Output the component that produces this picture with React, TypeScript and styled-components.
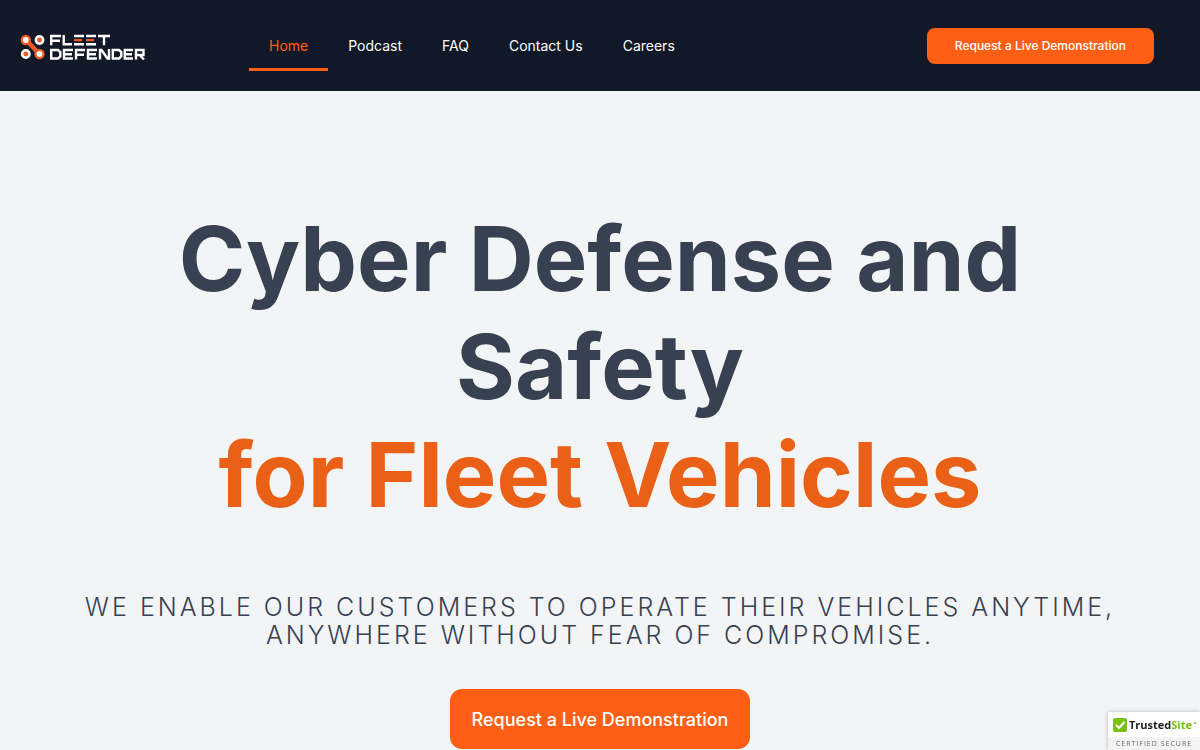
import React from "react";
import styled, { createGlobalStyle } from "styled-components";

const GlobalStyle = createGlobalStyle`
  *, *::before, *::after { box-sizing: border-box; }
  body {
    margin: 0;
    background: #f3f4f6;
    color: #374151;
    font-family: Inter, "Liberation Sans", sans-serif;
    overflow-x: hidden;
    scrollbar-width: none;
  }
`;

const Header = styled.header`
  display: flex;
  align-items: center;
  height: 91px;
  padding: 0 46px 0 20px;
  background: #111827;
`;

const LogoLink = styled.a`
  display: block;
  width: 126px;
  height: 29px;
  margin-right: 103px;
`;

const Nav = styled.nav`
  display: flex;
  flex: 1;
`;

const NavLink = styled.a<{ $active?: boolean }>`
  padding: 16px 20px 12px;
  border-bottom: 3px solid ${(p) => (p.$active ? "#ff5f15" : "transparent")};
  color: ${(p) => (p.$active ? "#ff5f15" : "#ffffff")};
  font-size: 14px;
  line-height: 20px;
  text-decoration: none;
`;

const DemoButton = styled.button<{ $large?: boolean }>`
  border: 0;
  background: #ff5f15;
  color: #ffffff;
  font-family: inherit;
  font-weight: 500;
  white-space: nowrap;
  height: ${(p) => (p.$large ? "60px" : "36px")};
  padding: ${(p) => (p.$large ? "0 22px" : "0 28px")};
  border-radius: ${(p) => (p.$large ? "12px" : "8px")};
  font-size: ${(p) => (p.$large ? "18px" : "12px")};
`;

const Hero = styled.main`
  display: flex;
  flex-direction: column;
  align-items: center;
  padding: 114px 40px 0;
  text-align: center;
`;

const Title = styled.h1`
  max-width: 960px;
  margin: 0;
  font-size: 90px;
  font-weight: 700;
  line-height: 108px;
`;

const Accent = styled.span`
  display: block;
  color: #ea6016;
`;

const Lead = styled.p`
  margin: 64px 0 40px;
  font-size: 25px;
  font-weight: 300;
  line-height: 28px;
  letter-spacing: 3px;
  text-transform: uppercase;
`;

const TrustBadge = styled.a`
  position: fixed;
  right: 0;
  bottom: 0;
  width: 92px;
  background: #ffffff;
  box-shadow: 0 0 4px rgba(0, 0, 0, 0.25);
  color: #222222;
  font-family: "Open Sans", sans-serif;
  text-decoration: none;
`;

const TrustName = styled.span`
  display: flex;
  align-items: center;
  gap: 2px;
  height: 25px;
  padding-left: 5px;
  font-size: 11px;
  font-weight: 700;
`;

const TrustSite = styled.span`
  color: #76c011;
`;

const TrustCaption = styled.span`
  display: block;
  height: 13px;
  background: #f3f3f3;
  color: #6b6b6b;
  font-size: 7px;
  line-height: 13px;
  letter-spacing: 1px;
  text-align: center;
  white-space: nowrap;
`;

function Logo() {
  return (
    <svg width="126" height="29" viewBox="0 0 126 29" fill="none" aria-hidden="true">
      <path d="M6 9 19 22.500" stroke="#ee5a24" strokeWidth="4.5" />
      <circle cx="5.800" cy="9" r="5.2" fill="#ee5a24" />
      <circle cx="19.500" cy="23" r="5.2" fill="#ee5a24" />
      <circle cx="5.800" cy="9" r="2.900" fill="#fff" />
      <circle cx="19.500" cy="23" r="2.900" fill="#fff" />
      <circle cx="19.500" cy="9" r="3.700" fill="#ee5a24" stroke="#fff" strokeWidth="2.5" />
      <circle cx="5.800" cy="23" r="3.700" fill="#ee5a24" stroke="#fff" strokeWidth="2.5" />
      <g stroke="#fff" strokeWidth="2.4">
        <path d="M31.200 14.300V5H41M31.200 9.800H40" />
        <path d="M43.700 4V13.200H52" />
        <path d="M54 5H64M54 13.200H64M66 5H76M66 13.200H76" />
        <path d="M78 5H90M84 5V14.300" />
        <path d="M31.200 19H38L40.300 21V25.500L38 27.500H31.200Z" />
        <path d="M53 19H44V27.500H53M44 23.200H52" />
        <path d="M56 28.500V19H65M56 23.700H64" />
        <path d="M77 19H68V27.500H77M68 23.200H76" />
        <path d="M80 28.500V19H81.500L87.500 27.500H89V18" />
        <path d="M92.800 19H99L101.300 21V25.500L99 27.500H92.800Z" />
        <path d="M113 19H104.800V27.500H113M104.800 23.200H112" />
        <path d="M116 28.500V19H123.500V24H116M119.500 24 124 28.500" />
      </g>
      <path d="M54 9.200H62M66 9.200H74" stroke="#ee5a24" strokeWidth="2.2" />
    </svg>
  );
}

export default function App() {
  return (
    <>
      <GlobalStyle />
      <Header>
        <LogoLink href="#" aria-label="Fleet Defender">
          <Logo />
        </LogoLink>
        <Nav>
          <NavLink href="#" $active>Home</NavLink>
          <NavLink href="#">Podcast</NavLink>
          <NavLink href="#">FAQ</NavLink>
          <NavLink href="#">Contact Us</NavLink>
          <NavLink href="#">Careers</NavLink>
        </Nav>
        <DemoButton>Request a Live Demonstration</DemoButton>
      </Header>
      <Hero>
        <Title>
          Cyber Defense and Safety
          <Accent>for Fleet Vehicles</Accent>
        </Title>
        <Lead>We enable our customers to operate their vehicles anytime, anywhere without fear of compromise.</Lead>
        <DemoButton $large>Request a Live Demonstration</DemoButton>
      </Hero>
      <TrustBadge href="#">
        <TrustName>
          <svg width="14" height="14" viewBox="0 0 14 14" fill="none" aria-hidden="true">
            <rect width="14" height="14" rx="2" fill="#76c011" />
            <path d="M3 7 6 10 11.500 4" stroke="#fff" strokeWidth="2.200" />
          </svg>
          <span>
            Trusted<TrustSite>Site</TrustSite>
          </span>
          <svg width="2" height="10" viewBox="0 0 2 10" aria-hidden="true">
            <circle cx="1" cy="3" r="1" fill="#76c011" />
          </svg>
        </TrustName>
        <TrustCaption>CERTIFIED SECURE</TrustCaption>
      </TrustBadge>
    </>
  );
}
